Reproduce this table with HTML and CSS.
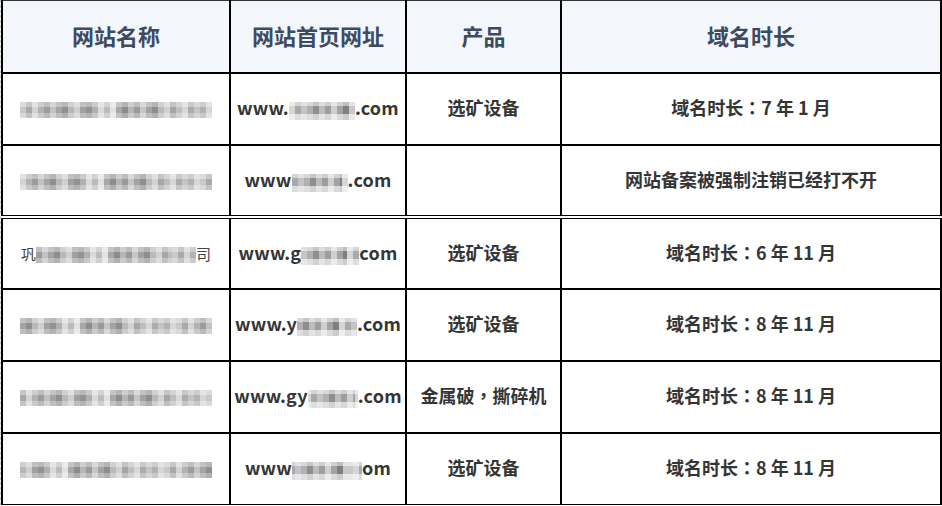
FILE: index.html
```html
<!DOCTYPE html>
<html lang="zh-CN">
<head>
<meta charset="utf-8">
<title>网站列表</title>
<link rel="stylesheet" href="styles.css">
</head>
<body>
<div class="frame">
<table class="sites">
  <colgroup>
    <col class="c1"><col class="c2"><col class="c3"><col class="c4">
  </colgroup>
  <thead>
    <tr><th>网站名称</th><th>网站首页网址</th><th>产品</th><th>域名时长</th></tr>
  </thead>
  <tbody>
    <tr>
      <td><span class="mosaic m1"></span></td>
      <td class="url">www.<span class="mz u1"></span>.com</td>
      <td>选矿设备</td>
      <td>域名时长<span class="p" lang="zh-TW">：</span>7 年 1 月</td>
    </tr>
    <tr class="dbl">
      <td><span class="mosaic m2"></span></td>
      <td class="url">www<span class="mz u2"></span>.com</td>
      <td></td>
      <td>网站备案被强制注销已经打不开</td>
    </tr>
    <tr>
      <td><span class="name">巩<span class="mosaic m3"></span>司</span></td>
      <td class="url">www.g<span class="mz u3"></span>com</td>
      <td>选矿设备</td>
      <td>域名时长<span class="p" lang="zh-TW">：</span>6 年 11 月</td>
    </tr>
    <tr>
      <td><span class="mosaic m4"></span></td>
      <td class="url">www.y<span class="mz u4"></span>.com</td>
      <td>选矿设备</td>
      <td>域名时长<span class="p" lang="zh-TW">：</span>8 年 11 月</td>
    </tr>
    <tr>
      <td><span class="mosaic m5"></span></td>
      <td class="url">www.gy<span class="mz u5"></span>.com</td>
      <td>金属破<span class="p" lang="zh-TW">，</span>撕碎机</td>
      <td>域名时长<span class="p" lang="zh-TW">：</span>8 年 11 月</td>
    </tr>
    <tr>
      <td><span class="mosaic m6"></span></td>
      <td class="url">www<span class="mz u6"></span>om</td>
      <td>选矿设备</td>
      <td>域名时长<span class="p" lang="zh-TW">：</span>8 年 11 月</td>
    </tr>
  </tbody>
</table>
</div>
</body>
</html>
```
FILE: styles.css
```css
html, body {
  margin: 0;
  padding: 0;
  background: #fff;
}
.frame {
  width: 940px;
  height: 504px;
  border: 1px dashed #c8c8c8;
  border-top: none;
  border-right: none;
}
.sites {
  border-collapse: collapse;
  table-layout: fixed;
  width: 939px;
  font-family: "Noto Sans CJK SC", "Noto Sans", sans-serif;
  font-weight: 700;
  color: #353535;
  font-size: 18px;
}
.c1 { width: 228px; }
.c2 { width: 176px; }
.c3 { width: 155px; }
.c4 { width: 380px; }
.sites th, .sites td {
  border: 2px solid #000;
  text-align: center;
  vertical-align: middle;
  padding: 0 0 3px 0;
  white-space: nowrap;
}
.sites thead th {
  border-top: 1px solid #333;
  padding: 0 0 2px 0;
}
.sites tr { height: 72px; }
.sites th {
  background: #f3f7fc;
  color: #3d4a5f;
  font-size: 22px;
}
.sites tr.dbl td {
  border-bottom: 4px double #000;
}
.p {
  font-family: "Noto Sans CJK TC", "Noto Sans CJK SC", sans-serif;
}
.url {
  font-size: 18px;
  letter-spacing: 0.2px;
}
.name { font-weight: 400; color: #444; font-size: 15px; }
.mosaic {
  display: inline-block;
  vertical-align: middle;
  width: 192px;
  height: 16px;
  background:
    linear-gradient(180deg, rgba(255,255,255,0.35) 0 5px, rgba(255,255,255,0) 5px 11px, rgba(255,255,255,0.3) 11px),
    linear-gradient(90deg,
      #c9c9cc 0 6px, #a9a9ab 6px 12px, #d4d4d6 12px 18px, #b3b3b5 18px 24px,
      #9c9c9e 24px 30px, #c2c2c4 30px 36px, #a4a4a6 36px 42px, #8f8f91 42px 48px,
      #b8b8ba 48px 54px, #cfcfd1 54px 60px, #a0a0a2 60px 66px, #939395 66px 72px,
      #b0b0b2 72px 78px, #dadadc 78px 84px, #bcbcbe 84px 90px, #e2e2e4 90px 96px,
      #a7a7a9 96px 102px, #8c8c8e 102px 108px, #b5b5b7 108px 114px, #9a9a9c 114px 120px,
      #c6c6c8 120px 126px, #a2a2a4 126px 132px, #8e8e90 132px 138px, #b9b9bb 138px 144px,
      #d1d1d3 144px 150px, #a6a6a8 150px 156px, #bebec0 156px 162px, #d8d8da 162px 168px,
      #acacae 168px 174px, #c4c4c6 174px 180px, #b2b2b4 180px 186px, #d6d6d8 186px 192px);
}
.m2 { background-position: 0 0, -12px 0; }
.m3 { width: 160px; background-position: 0 0, -24px 0; }
.m4 { background-position: 0 0, -36px 0; }
.m5 { background-position: 0 0, -6px 0; }
.m6 { background-position: 0 0, -48px 0; }
.mz {
  display: inline-block;
  vertical-align: -5px;
  width: 66px;
  height: 18px;
  background:
    linear-gradient(180deg, rgba(255,255,255,0.5) 0 4px, rgba(255,255,255,0) 4px 12px, rgba(255,255,255,0.6) 12px),
    linear-gradient(90deg,
      #d6d6d8 0 6px, #a9a9ab 6px 12px, #c4c4c6 12px 18px, #b0b0b2 18px 24px,
      #8e8e90 24px 30px, #bcbcbe 30px 36px, #9e9ea0 36px 42px, #cfcfd1 42px 48px,
      #a3a3a5 48px 54px, #7f7f81 54px 60px, #c8c8ca 60px 66px);
}
.u1 { width: 66px; }
.u2 { width: 56px; background-position: 0 0, -6px 0; }
.u3 { width: 58px; background-position: 0 0, -12px 0; }
.u4 { width: 60px; background-position: 0 0, -18px 0; }
.u5 { width: 50px; background-position: 0 0, -3px 0; }
.u6 { width: 70px; background-position: 0 0, -9px 0; }
```
